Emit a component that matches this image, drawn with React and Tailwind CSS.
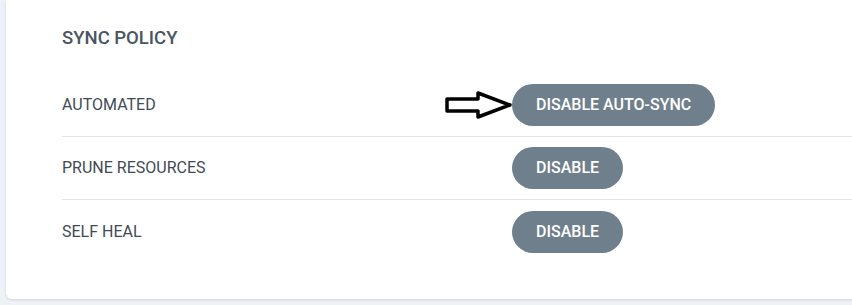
import React from 'react'

const rows = [
  { label: 'AUTOMATED', action: 'DISABLE AUTO-SYNC', arrow: true },
  { label: 'PRUNE RESOURCES', action: 'DISABLE' },
  { label: 'SELF HEAL', action: 'DISABLE' },
]

function Arrow() {
  return (
    <svg className="absolute left-[-68px] top-1/2 -translate-y-1/2" width="70" height="30" viewBox="0 0 70 30">
      <polygon
        points="3,9 34,9 34,3 66,15 34,27 34,21 3,21"
        fill="white"
        stroke="black"
        strokeWidth="3.5"
        strokeLinejoin="round"
      />
    </svg>
  )
}

export default function App() {
  return (
    <div className="w-[852px] h-[305px] overflow-hidden bg-[#eef1f5] pl-[6px]" style={{ fontFamily: 'Roboto, "Noto Sans", sans-serif' }}>
      <div className="w-[880px] bg-white rounded-b-md shadow-[0_1px_3px_rgba(0,0,0,0.12)] pl-[56px] pt-[26px] pb-[36px]">
        <div className="h-[24px] leading-[24px] text-[18.5px] font-medium text-[#4a5562] mb-[24px]">SYNC POLICY</div>
        {rows.map((r, i) => (
          <div
            key={r.label}
            className={`h-[63px] flex items-center ${i < rows.length - 1 ? 'border-b border-[#e2e6eb]' : ''}`}
          >
            <div className="w-[450px] text-[16px] text-[#3f4a57]">{r.label}</div>
            <div className="relative">
              {r.arrow && <Arrow />}
              <button className="h-[42px] px-6 rounded-full bg-[#6f7f8b] text-white text-[16px] font-medium">
                {r.action}
              </button>
            </div>
          </div>
        ))}
      </div>
    </div>
  )
}
